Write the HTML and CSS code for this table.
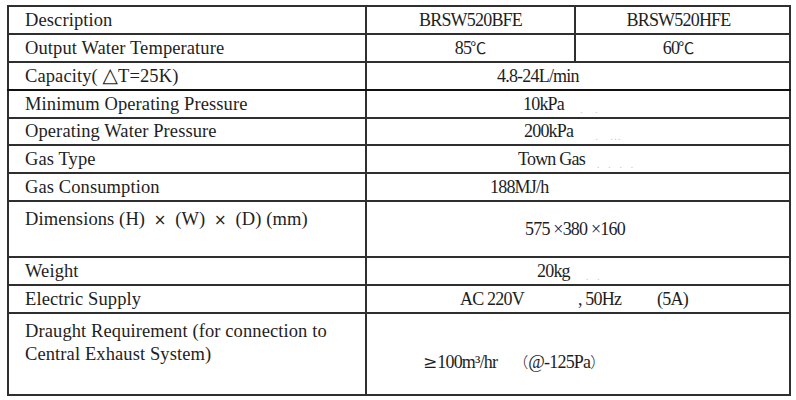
FILE: index.html
```html
<!DOCTYPE html>
<html lang="en">
<head>
<meta charset="utf-8">
<title>BRSW520 Specification</title>
<link rel="stylesheet" href="styles.css">
</head>
<body>
<div class="page">
  <table class="spec">
    <colgroup>
      <col class="c-label">
      <col class="c-a">
      <col class="c-b">
    </colgroup>
    <tbody>
      <tr>
        <td class="label">Description</td>
        <td class="val center">BRSW520BFE</td>
        <td class="val center shift">BRSW520HFE</td>
      </tr>
      <tr>
        <td class="label">Output Water Temperature</td>
        <td class="val center">85<span class="deg">℃</span></td>
        <td class="val center shift">60<span class="deg">℃</span></td>
      </tr>
      <tr class="line-strong">
        <td class="label">Capacity( <span class="tri">△</span>T=25K)</td>
        <td class="val v-cap" colspan="2">4.8-24L/min</td>
      </tr>
      <tr>
        <td class="label">Minimum Operating Pressure</td>
        <td class="val v-min" colspan="2">10kPa<span class="speck s-min">.&nbsp;&nbsp;&nbsp;.</span></td>
      </tr>
      <tr class="short">
        <td class="label">Operating Water Pressure</td>
        <td class="val v-op" colspan="2">200kPa<span class="speck s-op">.&nbsp;&nbsp;&nbsp;...</span></td>
      </tr>
      <tr>
        <td class="label">Gas Type</td>
        <td class="val v-gas" colspan="2">Town Gas<span class="speck s-gas">.&nbsp;&nbsp;.&nbsp;&nbsp;.&nbsp;&nbsp;.</span></td>
      </tr>
      <tr>
        <td class="label">Gas Consumption</td>
        <td class="val v-cons" colspan="2">188MJ/h</td>
      </tr>
      <tr class="tall">
        <td class="label top">Dimensions (H) <span class="x">×</span> (W) <span class="x">×</span> (D) (mm)</td>
        <td class="val v-dim" colspan="2">575 ×380 ×160</td>
      </tr>
      <tr>
        <td class="label">Weight</td>
        <td class="val v-wt" colspan="2">20kg<span class="speck s-wt">.&nbsp;&nbsp;.</span></td>
      </tr>
      <tr>
        <td class="label">Electric Supply</td>
        <td class="val v-elec" colspan="2"><span class="part">AC 220V</span><span class="part p-hz">, 50Hz</span><span class="part p-amp">(5A)</span></td>
      </tr>
      <tr class="last">
        <td class="label top two-line">Draught Requirement (for connection to<br>Central Exhaust System)</td>
        <td class="val v-draught" colspan="2"><span class="ge">≥</span>100m³/hr<span class="fw fw-open">（</span>@-125Pa<span class="fw">）</span></td>
      </tr>
    </tbody>
  </table>
</div>
</body>
</html>
```

FILE: styles.css
```css
html, body {
  margin: 0;
  padding: 0;
  background: #ffffff;
}

.page {
  padding: 5px 0 0 7px;
}

.spec {
  border-collapse: collapse;
  table-layout: fixed;
  width: 782px;
  border: 2px solid #2b2b2b;
  color: #1e1e1e;
}

.c-label { width: 358px; }
.c-a { width: 209px; }
.c-b { width: 215px; }

.spec tr { height: 28px; }
.spec tr.short { height: 27px; }
.spec tr.tall { height: 56px; }
.spec tr.last { height: 82px; }

.spec td {
  border: 2px solid #2f2f2f;
  padding: 0;
  vertical-align: middle;
  white-space: nowrap;
}

.spec tr.line-strong td {
  border-bottom-color: #111111;
}

.label {
  font-family: "Liberation Serif", "Times New Roman", serif;
  font-size: 18.5px;
  line-height: 21px;
  padding-left: 16px !important;
  letter-spacing: 0.1px;
}

.label.top {
  vertical-align: top;
  padding-top: 7px !important;
}

.label.two-line {
  line-height: 23px;
  padding-top: 6px !important;
}

.label .x {
  font-family: "DejaVu Sans", sans-serif;
  font-size: 15px;
  padding: 0 4px;
}

.label .tri {
  font-family: "DejaVu Sans", sans-serif;
  font-size: 20px;
  line-height: 1;
}

.val {
  font-family: "Liberation Serif", "Noto Sans CJK TC", serif;
  font-size: 18px;
  line-height: 21px;
  letter-spacing: -0.8px;
  text-align: left;
}

.val.center { text-align: center; }
.val.center.shift { padding-right: 8px !important; }

.deg {
  font-family: "Noto Sans CJK TC", serif;
  font-size: 16px;
  line-height: 1;
  letter-spacing: 0;
  margin-left: -1px;
}

.v-cap { padding-left: 130px !important; }
.v-min { padding-left: 156px !important; }
.v-op { padding-left: 157px !important; }
.v-gas { padding-left: 151px !important; }
.v-cons { padding-left: 123px !important; }
.v-dim { padding-left: 158px !important; }
.v-wt { padding-left: 170px !important; }
.v-elec { padding-left: 93px !important; }
.v-draught {
  padding-left: 56px !important;
  padding-top: 17px !important;
}

.ge {
  font-family: "DejaVu Serif", serif;
  font-size: 17px;
  letter-spacing: 0;
}

.part { display: inline-block; }
.p-hz { margin-left: 54px; }
.p-amp { margin-left: 36px; }

.fw {
  font-family: "Noto Sans CJK TC", sans-serif;
  font-size: 15px;
  line-height: 1;
  font-weight: 300;
  letter-spacing: 0;
}

.fw-open { margin-left: 16px; }

.speck {
  color: #c9c9c9;
  font-size: 11px;
  line-height: 1;
  letter-spacing: 1px;
  vertical-align: -3px;
}

.s-min { margin-left: 16px; }
.s-op { margin-left: 22px; }
.s-gas { margin-left: 12px; }
.s-wt { margin-left: 16px; }
```
